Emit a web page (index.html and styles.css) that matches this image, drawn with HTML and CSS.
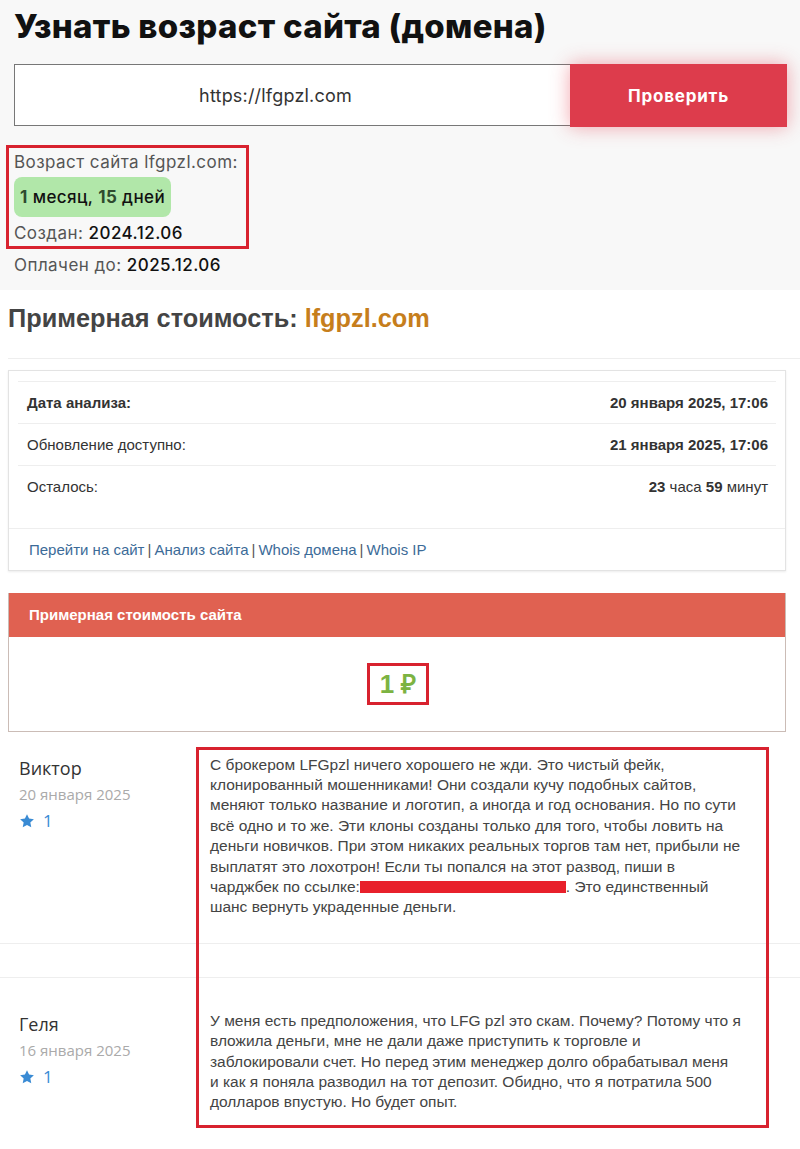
FILE: index.html
```html
<!DOCTYPE html>
<html lang="ru">
<head>
<meta charset="utf-8">
<title>Узнать возраст сайта</title>
<link rel="stylesheet" href="styles.css">
</head>
<body>
<section class="top">
  <h1 class="top-title">Узнать возраст сайта (домена)</h1>
  <form class="search">
    <div class="search-input">https://lfgpzl.com</div>
    <button class="search-btn" type="button">Проверить</button>
  </form>
  <div class="age-box">
    <div class="age-line">Возраст сайта lfgpzl.com:</div>
    <div class="age-pill"><b>1</b> месяц, <b>15</b> дней</div>
    <div class="age-line">Создан: <span class="val">2024.12.06</span></div>
  </div>
  <div class="age-line paid">Оплачен до: <span class="val">2025.12.06</span></div>
</section>

<section class="cost">
  <h2 class="cost-title">Примерная стоимость: <span class="domain">lfgpzl.com</span></h2>
  <div class="hr"></div>

  <div class="panel">
    <div class="panel-body">
      <table class="info">
        <tr><td class="b">Дата анализа:</td><td class="r b">20 января 2025, 17:06</td></tr>
        <tr><td>Обновление доступно:</td><td class="r b">21 января 2025, 17:06</td></tr>
        <tr><td>Осталось:</td><td class="r"><b>23</b> часа <b>59</b> минут</td></tr>
      </table>
    </div>
    <div class="panel-foot">
      <a href="#">Перейти на сайт</a> <span class="sep">|</span> <a href="#">Анализ сайта</a> <span class="sep">|</span> <a href="#">Whois домена</a> <span class="sep">|</span> <a href="#">Whois IP</a>
    </div>
  </div>

  <div class="price">
    <div class="price-head">Примерная стоимость сайта</div>
    <div class="price-body"><span class="price-val">1 ₽</span></div>
  </div>
</section>

<section class="comments">
  <div class="comment first">
    <div class="author">
      <div class="name">Виктор</div>
      <div class="date">20 января 2025</div>
      <div class="rating"><svg class="star" viewBox="0 0 24 24"><path d="M12 1.8l3.1 6.6 7.2.9-5.3 5 1.4 7.1L12 17.9l-6.4 3.5 1.4-7.1-5.3-5 7.2-.9z"/></svg><span>1</span></div>
    </div>
    <div class="text">С брокером LFGpzl ничего хорошего не жди. Это чистый фейк,<br>клонированный мошенниками! Они создали кучу подобных сайтов,<br>меняют только название и логотип, а иногда и год основания. Но по сути<br>всё одно и то же. Эти клоны созданы только для того, чтобы ловить на<br>деньги новичков. При этом никаких реальных торгов там нет, прибыли не<br>выплатят это лохотрон! Если ты попался на этот развод, пиши в<br>чарджбек по ссылке:<span class="redact"></span>. Это единственный<br>шанс вернуть украденные деньги.</div>
  </div>
  <div class="comment second">
    <div class="author">
      <div class="name">Геля</div>
      <div class="date">16 января 2025</div>
      <div class="rating"><svg class="star" viewBox="0 0 24 24"><path d="M12 1.8l3.1 6.6 7.2.9-5.3 5 1.4 7.1L12 17.9l-6.4 3.5 1.4-7.1-5.3-5 7.2-.9z"/></svg><span>1</span></div>
    </div>
    <div class="text">У меня есть предположения, что LFG pzl это скам. Почему? Потому что я<br>вложила деньги, мне не дали даже приступить к торговле и<br>заблокировали счет. Но перед этим менеджер долго обрабатывал меня<br>и как я поняла разводил на тот депозит. Обидно, что я потратила 500<br>долларов впустую. Но будет опыт.</div>
  </div>
  <div class="highlight"></div>
</section>
</body>
</html>
```
FILE: styles.css
```css
* { box-sizing: border-box; }
body {
  margin: 0;
  background: #fff;
  font-family: "Liberation Sans", Arial, sans-serif;
  color: #333;
}

/* ---------- top ---------- */
.top {
  background: #f8f8f8;
  height: 290px;
  padding: 4px 14px 0 14px;
  font-family: Inter, "Noto Sans", sans-serif;
}
.top-title {
  margin: 0;
  font-size: 33px;
  line-height: 44px;
  font-weight: 800;
  color: #111;
  letter-spacing: 0.3px;
}
.search {
  display: flex;
  margin-top: 16px;
  width: 773px;
}
.search-input {
  width: 556px;
  height: 62px;
  border: 1px solid #777;
  border-right: none;
  background: #fff;
  display: flex;
  align-items: center;
  justify-content: center;
  padding-right: 34px;
  font-size: 18px;
  letter-spacing: 0.2px;
  color: #333;
}
.search-btn {
  width: 217px;
  height: 63px;
  border: none;
  background: #dd3c4c;
  color: #fff;
  font-family: inherit;
  font-size: 17px;
  font-weight: 700;
  letter-spacing: 0.8px;
  box-shadow: 0 0 18px rgba(226, 60, 76, 0.45);
}
.age-box {
  display: inline-block;
  margin-top: 18px;
  margin-left: -8px;
  border: 3px solid #d8222f;
  padding: 1px 0 0 5px;
  width: 243px;
  white-space: nowrap;
}
.age-line {
  font-size: 17px;
  line-height: 26px;
  letter-spacing: 0.45px;
  color: #555;
  white-space: nowrap;
}
.age-line .val { color: #111; font-weight: 500; }
.age-pill {
  display: inline-block;
  background: #b1e7a9;
  border-radius: 8px;
  padding: 0 6px;
  margin: 2px 0 3px;
  height: 40px;
  line-height: 40px;
  font-size: 17px;
  letter-spacing: 0.4px;
  font-weight: 500;
  color: #111;
}
.age-pill b { color: #2e4a2e; font-weight: 700; }
.paid { margin-top: 3px; }

/* ---------- cost ---------- */
.cost {
  padding: 0 0 0 8px;
}
.cost-title {
  margin: 0;
  padding-top: 12px;
  font-size: 25.3px;
  line-height: 32px;
  color: #444;
  font-weight: 700;
}
.domain { color: #c67e1c; }
.hr {
  height: 1px;
  background: #eee;
  margin-top: 24px;
}
.panel {
  margin-top: 11px;
  width: 778px;
  border: 1px solid #e3e3e3;
  box-shadow: 0 1px 2px rgba(0,0,0,0.08);
  background: #fff;
}
.panel-body { padding: 10px 9px 20px 9px; }
.info {
  width: 100%;
  border-collapse: collapse;
  font-size: 15px;
}
.info td {
  border-top: 1px solid #eee;
  height: 42px;
  padding: 0 8px 0 9px;
  color: #333;
}
.info .r { text-align: right; }
.info .b { font-weight: 700; }
.panel-foot {
  border-top: 1px solid #eee;
  height: 42px;
  padding: 0 20px;
  display: flex;
  align-items: center;
  gap: 3px;
  font-size: 15px;
}
.panel-foot a { color: #3c6b98; text-decoration: none; }
.panel-foot .sep { color: #555; }

.price {
  margin-top: 22px;
  width: 778px;
  border: 1px solid #cbbcb6;
  border-top: none;
}
.price-head {
  background: #e06151;
  color: #fff;
  height: 44px;
  padding: 0 20px;
  display: flex;
  align-items: center;
  font-size: 15px;
  font-weight: 700;
}
.price-body {
  height: 94px;
  display: flex;
  align-items: center;
  justify-content: center;
}
.price-val {
  display: inline-block;
  border: 3px solid #d8222f;
  width: 62px;
  height: 42px;
  line-height: 36px;
  text-align: center;
  color: #7cb342;
  font-size: 26px;
  font-weight: 700;
  margin-left: 2px;
}

/* ---------- comments ---------- */
.comments {
  position: relative;
  padding-bottom: 20px;
}
.comment {
  display: flex;
  border-bottom: 1px solid #eee;
}
.comment.first { padding: 23px 0 25px; }
.comment.second { margin-top: 33px; border-top: 1px solid #eee; border-bottom: none; padding: 33px 0 0; }
.author {
  width: 210px;
  padding-left: 19px;
  font-family: "Open Sans", sans-serif;
}
.name { font-size: 18px; line-height: 26px; color: #333; }
.date { font-size: 15px; line-height: 26px; color: #aaa; }
.rating {
  display: flex;
  align-items: center;
  gap: 8px;
  margin-top: 1px;
  color: #3a8bd4;
  font-size: 17px;
  line-height: 26px;
}
.star { width: 16px; height: 16px; fill: #3a8bd4; }
.text {
  font-size: 15.5px;
  line-height: 20.4px;
  color: #444;
  padding-top: 0;
}
.redact {
  display: inline-block;
  width: 206px;
  height: 12px;
  background: #e8202b;
  vertical-align: -1px;
}
.highlight {
  position: absolute;
  left: 196px;
  top: 15px;
  width: 573px;
  height: 381px;
  border: 3px solid #d8222f;
}
```
